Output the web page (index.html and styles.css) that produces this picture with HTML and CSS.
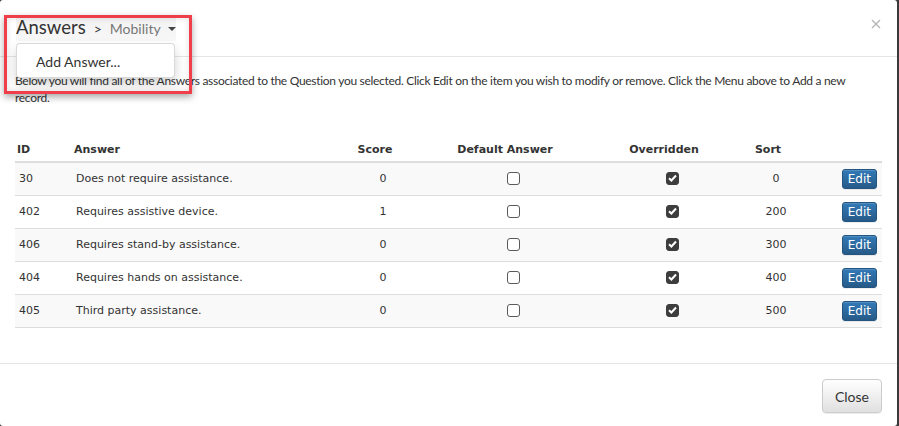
FILE: index.html
```html
<!DOCTYPE html>
<html>
<head>
<meta charset="utf-8">
<link rel="stylesheet" href="styles.css">
</head>
<body>
<div class="modal">
  <div class="modal-header">
    <h4 class="modal-title"><span class="title-main">Answers</span><span class="sep">&gt;</span><span class="crumb">Mobility</span><span class="caret"></span></h4>
    <button class="close" aria-label="Close"><svg width="10" height="10" viewBox="0 0 10 10"><path d="M1 1L9 9M9 1L1 9" stroke="#b5b5b5" stroke-width="1.4" fill="none"/></svg></button>
  </div>
  <div class="modal-body">
    <p class="intro">Below you will find all of the Answers associated to the Question you selected. Click Edit on the item you wish to modify or remove. Click the Menu above to Add a new record.</p>
    <table class="answers">
      <colgroup>
        <col class="c-id"><col class="c-answer"><col class="c-score"><col class="c-default"><col class="c-over"><col class="c-sort"><col class="c-edit">
      </colgroup>
      <thead>
        <tr><th>ID</th><th>Answer</th><th class="ctr">Score</th><th class="ctr">Default Answer</th><th class="ctr">Overridden</th><th class="ctr">Sort</th><th></th></tr>
      </thead>
      <tbody>
        <tr><td>30</td><td>Does not require assistance.</td><td class="ctr">0</td><td class="ctr"><span class="cb"></span></td><td class="ctr"><span class="cb on"><svg width="9" height="8" viewBox="0 0 9 8"><path d="M1 4.2L3.4 6.5L8 1.5" stroke="#fff" stroke-width="2" fill="none"/></svg></span></td><td class="ctr">0</td><td class="rt"><button class="btn-edit">Edit</button></td></tr>
        <tr><td>402</td><td>Requires assistive device.</td><td class="ctr">1</td><td class="ctr"><span class="cb"></span></td><td class="ctr"><span class="cb on"><svg width="9" height="8" viewBox="0 0 9 8"><path d="M1 4.2L3.4 6.5L8 1.5" stroke="#fff" stroke-width="2" fill="none"/></svg></span></td><td class="ctr">200</td><td class="rt"><button class="btn-edit">Edit</button></td></tr>
        <tr><td>406</td><td>Requires stand-by assistance.</td><td class="ctr">0</td><td class="ctr"><span class="cb"></span></td><td class="ctr"><span class="cb on"><svg width="9" height="8" viewBox="0 0 9 8"><path d="M1 4.2L3.4 6.5L8 1.5" stroke="#fff" stroke-width="2" fill="none"/></svg></span></td><td class="ctr">300</td><td class="rt"><button class="btn-edit">Edit</button></td></tr>
        <tr><td>404</td><td>Requires hands on assistance.</td><td class="ctr">0</td><td class="ctr"><span class="cb"></span></td><td class="ctr"><span class="cb on"><svg width="9" height="8" viewBox="0 0 9 8"><path d="M1 4.2L3.4 6.5L8 1.5" stroke="#fff" stroke-width="2" fill="none"/></svg></span></td><td class="ctr">400</td><td class="rt"><button class="btn-edit">Edit</button></td></tr>
        <tr><td>405</td><td>Third party assistance.</td><td class="ctr">0</td><td class="ctr"><span class="cb"></span></td><td class="ctr"><span class="cb on"><svg width="9" height="8" viewBox="0 0 9 8"><path d="M1 4.2L3.4 6.5L8 1.5" stroke="#fff" stroke-width="2" fill="none"/></svg></span></td><td class="ctr">500</td><td class="rt"><button class="btn-edit">Edit</button></td></tr>
      </tbody>
    </table>
  </div>
  <div class="modal-footer">
    <button class="btn-close">Close</button>
  </div>
  <ul class="dropdown-menu"><li>Add Answer...</li></ul>
  <div class="callout"></div>
</div>
</body>
</html>
```

FILE: styles.css
```css
* { box-sizing: border-box; }
html, body { margin: 0; padding: 0; }
body {
  background: #3a3a3a;
  width: 899px;
  height: 426px;
  overflow: hidden;
  font-family: Lato, "Liberation Sans", sans-serif;
  color: #333;
}
.modal {
  position: relative;
  width: 897px;
  height: 426px;
  background: #fff;
  border-radius: 3px;
  display: flex;
  flex-direction: column;
}
.modal-header {
  flex: none;
  height: 57px;
  padding: 15px 15px 0 16px;
  border-bottom: 1px solid #e5e5e5;
  display: flex;
  align-items: flex-start;
  justify-content: space-between;
}
.modal-title {
  margin: 0;
  font-size: 18.5px;
  font-weight: 400;
  line-height: 25.7px;
  height: 26px;
  display: flex;
  align-items: baseline;
  background: linear-gradient(#f2f2f2, #f7f7f7);
}
.title-main { color: #333; }
.sep { font-size: 14px; margin-left: 8px; color: #333; }
.crumb { font-size: 14px; margin-left: 8px; color: #777; }
.caret {
  display: inline-block;
  width: 0; height: 0;
  margin-left: 7px;
  border-top: 4px solid #444;
  border-left: 4px solid transparent;
  border-right: 4px solid transparent;
  align-self: center;
  margin-top: 2px;
}
.close {
  background: none;
  border: 0;
  padding: 0;
  margin: 4px 1px 0 0;
  width: 10px;
  height: 10px;
  display: flex;
}
.modal-body {
  padding: 15px;
  flex: none;
  border-bottom: 1px solid #e5e5e5;
}
.intro {
  margin: 0 0 26px 0;
  font-size: 12px;
  line-height: 17px;
  letter-spacing: -0.3px;
  color: #333;
}
.answers {
  width: 100%;
  border-collapse: collapse;
  table-layout: fixed;
  margin-bottom: 20px;
  font-family: "DejaVu Sans", Verdana, sans-serif;
  font-size: 11px;
  color: #333;
}
.c-id { width: 57px; }
.c-answer { width: 269px; }
.c-score { width: 84px; }
.c-default { width: 176px; }
.c-over { width: 142px; }
.c-sort { width: 66px; }
.c-edit { width: 73px; }
.answers th {
  font-weight: bold;
  text-align: left;
  padding: 10px 18px 3px 2px;
  line-height: 16px;
  border-bottom: 2px solid #ddd;
  white-space: nowrap;
}
.answers th.ctr { text-align: center; }
.answers td {
  padding: 8px 4px;
  line-height: 16px;
  height: 33px;
  border-bottom: 1px solid #ddd;
  vertical-align: middle;
}
.answers tbody tr:nth-child(odd) td { background: #f9f9f9; }
.answers td.ctr { text-align: center; }
.answers td.rt { text-align: right; padding-right: 5px; padding-top: 6px; padding-bottom: 6px; }
.cb {
  display: inline-block;
  width: 13px;
  height: 13px;
  border: 1px solid #5a5a5a;
  border-radius: 3px;
  background: #fff;
  vertical-align: middle;
  position: relative;
  top: -1px;
}
.cb.on {
  background: #3d3d3d;
  border-color: #3d3d3d;
  display: inline-flex;
  align-items: center;
  justify-content: center;
}
.btn-edit {
  font-family: "DejaVu Sans", Verdana, sans-serif;
  font-size: 12px;
  line-height: 18px;
  padding: 0 5px;
  height: 20px;
  color: #fff;
  border: 1px solid #245580;
  border-radius: 3px;
  background: linear-gradient(#337ab7, #265a88);
  box-shadow: inset 0 1px 0 rgba(255,255,255,.15), 0 1px 1px rgba(0,0,0,.075);
  vertical-align: middle;
}
.modal-footer {
  flex: none;
  padding: 15px;
  display: flex;
  justify-content: flex-end;
}
.btn-close {
  font-family: Lato, "Liberation Sans", sans-serif;
  font-size: 14px;
  color: #333;
  height: 34px;
  padding: 6px 12px;
  border: 1px solid #ccc;
  border-radius: 4px;
  background: linear-gradient(#fff, #e0e0e0);
  box-shadow: inset 0 1px 0 rgba(255,255,255,.15), 0 1px 1px rgba(0,0,0,.075);
}
.dropdown-menu {
  position: absolute;
  left: 16px;
  top: 43px;
  width: 159px;
  height: 35px;
  margin: 0;
  padding: 0;
  list-style: none;
  background: #fff;
  border: 1px solid rgba(0,0,0,.15);
  border-radius: 4px;
  box-shadow: 0 6px 12px rgba(0,0,0,.175);
}
.dropdown-menu li {
  padding: 0 0 0 19px;
  font-size: 14px;
  line-height: 36px;
  color: #333;
}
.callout {
  position: absolute;
  left: 4px;
  top: 15px;
  width: 188px;
  height: 79px;
  border: 3px solid #ee3f4a;
  box-shadow: 0 3px 7px rgba(0,0,0,.35), inset 0 0 6px rgba(0,0,0,.12);
  pointer-events: none;
}
```
